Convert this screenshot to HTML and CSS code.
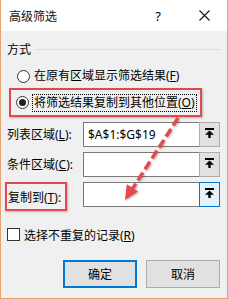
FILE: index.html
```html
<!DOCTYPE html>
<html lang="zh-CN">
<head>
  <meta charset="UTF-8">
  <title>高级筛选</title>
  <link rel="stylesheet" href="styles.css">
</head>
<body>
  <div class="window">
    <!-- 标题栏 -->
    <div class="titlebar">
      <span class="title-text">高级筛选</span>
      <span class="title-help">?</span>
      <svg class="title-close" width="11" height="11" viewBox="0 0 11 11">
        <path d="M0.5 0.5 L10.5 10.5 M10.5 0.5 L0.5 10.5" stroke="#111" stroke-width="1.1" fill="none"/>
      </svg>
    </div>

    <div class="content">
      <!-- 方式 -->
      <div class="group-head">
        <span>方式</span>
        <div class="group-line"></div>
      </div>

      <div class="radio-row first">
        <span class="radio"></span>
        <span class="radio-text">在原有区域显示筛选结果(<u>F</u>)</span>
      </div>

      <div class="mark-box">
        <div class="radio-row">
          <span class="radio checked"></span>
          <span class="radio-text focus">将筛选结果复制到其他位置(<u>O</u>)</span>
        </div>
      </div>

      <!-- 区域输入 -->
      <div class="field-list">
        <div class="field-row">
          <span class="field-label">列表区域(<u>L</u>):</span>
          <div class="field-input">$A$1:$G$19</div>
          <div class="pick-btn">
            <svg width="9" height="10" viewBox="0 0 9 10"><rect x="0" y="0" width="9" height="2" fill="#000"/><path d="M0 6.8 L4.5 2.6 L9 6.8 Z" fill="#000"/><rect x="3.3" y="6" width="2.4" height="4" fill="#000"/></svg>
          </div>
        </div>
        <div class="field-row">
          <span class="field-label">条件区域(<u>C</u>):</span>
          <div class="field-input"></div>
          <div class="pick-btn">
            <svg width="9" height="10" viewBox="0 0 9 10"><rect x="0" y="0" width="9" height="2" fill="#000"/><path d="M0 6.8 L4.5 2.6 L9 6.8 Z" fill="#000"/><rect x="3.3" y="6" width="2.4" height="4" fill="#000"/></svg>
          </div>
        </div>
        <div class="field-row">
          <span class="field-label marked">复制到(<u>T</u>):</span>
          <div class="field-input"></div>
          <div class="pick-btn active">
            <svg width="9" height="10" viewBox="0 0 9 10"><rect x="0" y="0" width="9" height="2" fill="#000"/><path d="M0 6.8 L4.5 2.6 L9 6.8 Z" fill="#000"/><rect x="3.3" y="6" width="2.4" height="4" fill="#000"/></svg>
          </div>
        </div>
      </div>

      <div class="check-row">
        <span class="checkbox"></span>
        <span>选择不重复的记录(<u>R</u>)</span>
      </div>

      <div class="btn-row">
        <div class="btn default">确定</div>
        <div class="btn">取消</div>
      </div>
    </div>

    <!-- 红色虚线箭头标注 -->
    <svg class="arrow" width="228" height="299" viewBox="0 0 228 299">
      <line x1="178" y1="118" x2="131" y2="191" stroke="#e8474c" stroke-width="3.5" stroke-dasharray="9 4"/>
      <path d="M125 200 L126.8 184.2 L138 191.4 Z" fill="#e8474c"/>
    </svg>
  </div>
</body>
</html>
```

FILE: styles.css
```css
body {
  margin: 0;
  font-family: 'Noto Sans', 'Noto Sans CJK SC', sans-serif;
  font-size: 12px;
  color: #000;
  background: #fff;
}
.window {
  position: relative;
  width: 228px;
  height: 299px;
  box-sizing: border-box;
  border: 1px solid #e3a271;
  border-top: none;
  background: #f0f0f0;
}
.titlebar {
  height: 31px;
  background: #fff;
  display: flex;
  align-items: center;
  padding-left: 8px;
}
.title-text {
  flex: 1;
  color: #111;
}
.title-help {
  margin-right: 38px;
  font-size: 13px;
}
.title-close {
  margin-right: 17px;
}
.content {
  padding: 11px 6px 0 6px;
}
.group-head {
  display: flex;
  align-items: center;
  height: 16px;
  line-height: 16px;
}
.group-line {
  flex: 1;
  height: 1px;
  background: #dcdcdc;
  margin-left: 5px;
  margin-top: -2px;
}
.radio-row {
  display: flex;
  align-items: center;
  height: 16px;
  line-height: 16px;
}
.radio-row.first {
  margin-top: 10px;
  padding-left: 10px;
}
.radio {
  width: 11px;
  height: 11px;
  border: 1px solid #333;
  border-radius: 50%;
  background: #fff;
  margin-right: 4px;
  display: flex;
  align-items: center;
  justify-content: center;
}
.radio.checked::after {
  content: '';
  width: 7px;
  height: 7px;
  border-radius: 50%;
  background: #222;
}
.mark-box {
  margin: 4px 0 0 2px;
  width: 189px;
  height: 25px;
  border: 2px solid #e2494e;
  box-shadow: 1px 1px 2px rgba(0, 0, 0, 0.25);
  display: flex;
  align-items: center;
}
.mark-box .radio-row {
  padding-left: 5px;
}
.radio-text.focus {
  outline: 1px dotted #000;
  padding: 0 1px;
}
.field-list {
  margin-top: 5px;
  display: flex;
  flex-direction: column;
  gap: 5px;
  padding-right: 1px;
}
.field-row {
  display: flex;
  align-items: center;
  height: 25px;
}
.field-label {
  width: 76px;
  line-height: 16px;
}
.field-label.marked {
  box-sizing: border-box;
  width: 62px;
  height: 29px;
  margin: 0 16px 0 -2px;
  padding: 6px 0 0 1px;
  align-self: flex-start;
  border: 2px solid #e2494e;
  box-shadow: 1px 1px 2px rgba(0, 0, 0, 0.25);
}
.field-input {
  flex: 1;
  height: 25px;
  box-sizing: border-box;
  border: 1px solid #7a7a7a;
  border-right: none;
  background: #fff;
  padding-left: 4px;
  line-height: 23px;
}
.pick-btn {
  width: 21px;
  height: 25px;
  box-sizing: border-box;
  border: 1px solid #adadad;
  background: #e1e1e1;
  display: flex;
  align-items: center;
  justify-content: center;
}
.pick-btn svg {
  margin-top: -3px;
}
.pick-btn.active {
  border-color: #0078d7;
  background: #e5f1fb;
}
.check-row {
  margin-top: 21px;
  display: flex;
  align-items: center;
  height: 13px;
}
.checkbox {
  width: 11px;
  height: 11px;
  border: 1px solid #333;
  background: #fff;
  margin-right: 4px;
}
.btn-row {
  margin-top: 19px;
  display: flex;
  justify-content: flex-end;
  gap: 9px;
  padding-right: 1px;
}
.btn {
  width: 74px;
  height: 28px;
  box-sizing: border-box;
  border: 1px solid #adadad;
  background: #e1e1e1;
  display: flex;
  align-items: center;
  justify-content: center;
}
.btn.default {
  border: 2px solid #0078d7;
}
.arrow {
  position: absolute;
  left: -1px;
  top: 0;
  filter: drop-shadow(1px 1px 1px rgba(0, 0, 0, 0.3));
}
```
